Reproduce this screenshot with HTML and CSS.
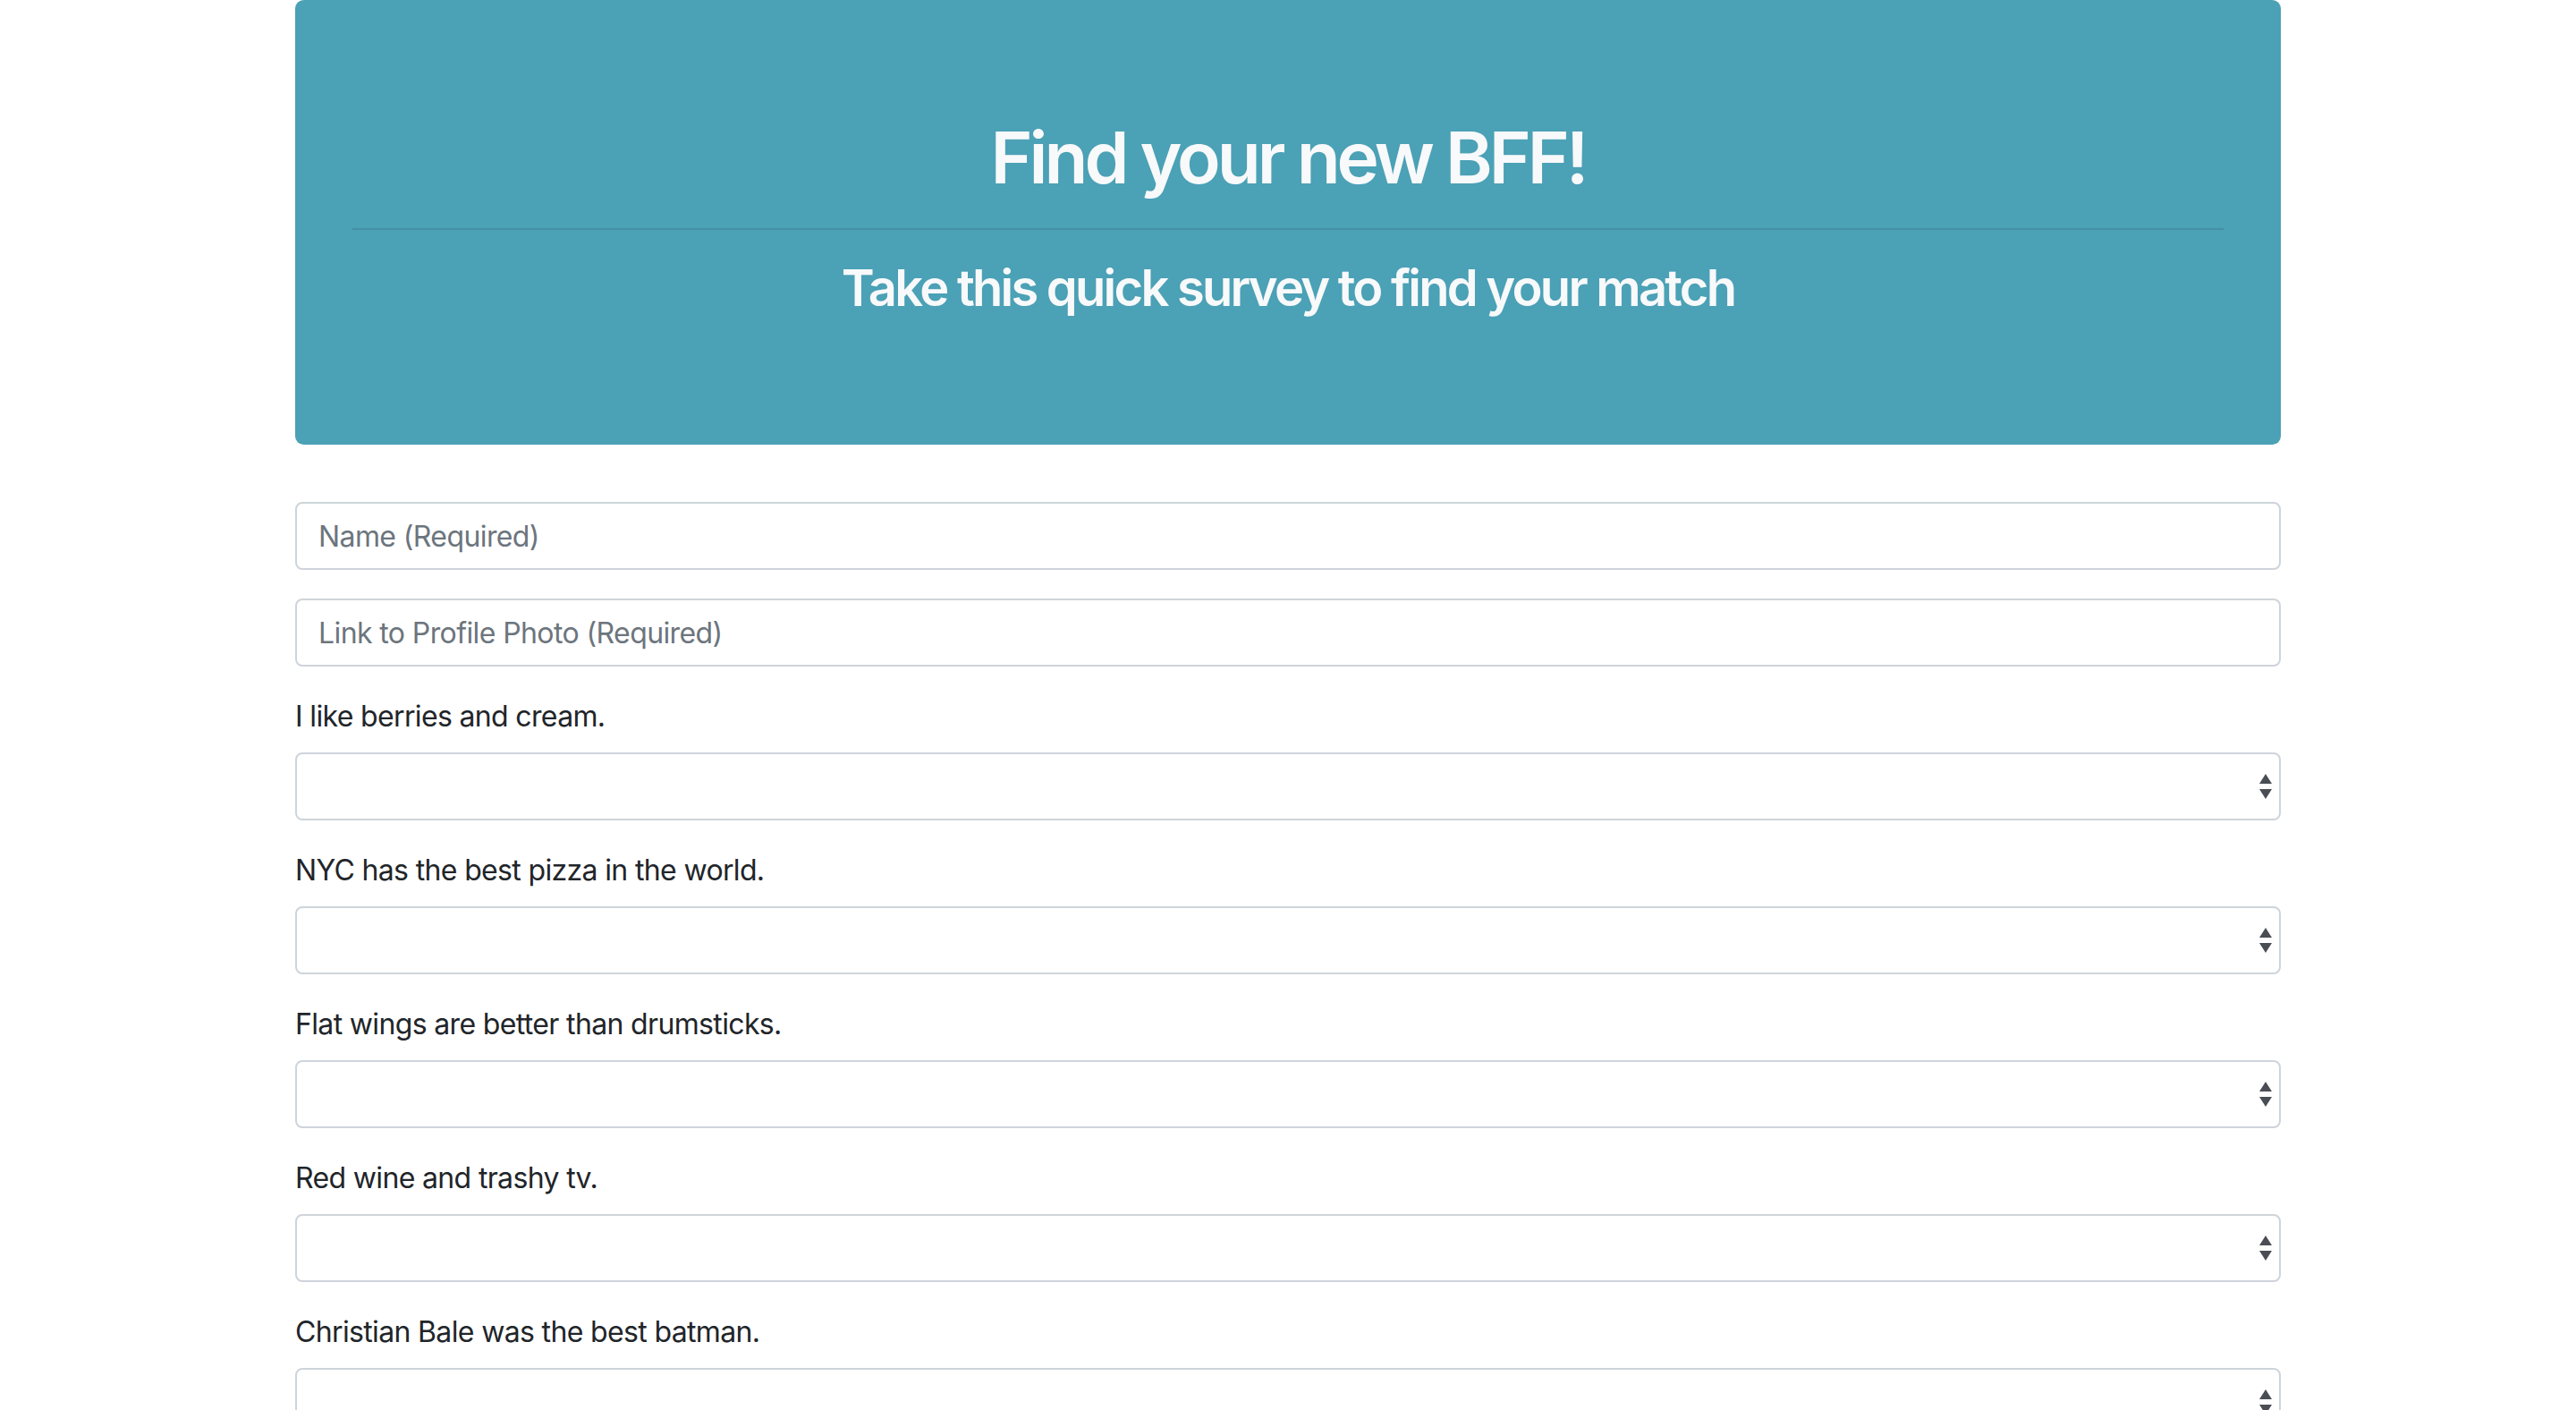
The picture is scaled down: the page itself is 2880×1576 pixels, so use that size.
FILE: index.html
```html
<!DOCTYPE html>
<html lang="en">
<head>
<meta charset="utf-8">
<title>Friend Finder Survey</title>
<link rel="stylesheet" href="styles.css">
</head>
<body>
<div class="container">
  <div class="jumbotron">
    <h1 class="title">Find your new BFF!</h1>
    <hr class="divider">
    <h3 class="subtitle">Take this quick survey to find your match</h3>
  </div>

  <form class="survey">
    <div class="form-group">
      <input class="form-control" type="text" placeholder="Name (Required)">
    </div>
    <div class="form-group">
      <input class="form-control" type="text" placeholder="Link to Profile Photo (Required)">
    </div>

    <div class="form-group">
      <label class="q-label">I like berries and cream.</label>
      <div class="select-wrap">
        <select class="form-control select"><option></option><option>1 (Strongly Disagree)</option><option>2</option><option>3</option><option>4</option><option>5 (Strongly Agree)</option></select>
        <svg class="arrows" viewBox="0 0 14 28" width="14" height="28"><path d="M7 0 L14 11 L0 11 Z M0 17 L14 17 L7 28 Z"/></svg>
      </div>
    </div>

    <div class="form-group">
      <label class="q-label">NYC has the best pizza in the world.</label>
      <div class="select-wrap">
        <select class="form-control select"><option></option><option>1 (Strongly Disagree)</option><option>2</option><option>3</option><option>4</option><option>5 (Strongly Agree)</option></select>
        <svg class="arrows" viewBox="0 0 14 28" width="14" height="28"><path d="M7 0 L14 11 L0 11 Z M0 17 L14 17 L7 28 Z"/></svg>
      </div>
    </div>

    <div class="form-group">
      <label class="q-label">Flat wings are better than drumsticks.</label>
      <div class="select-wrap">
        <select class="form-control select"><option></option><option>1 (Strongly Disagree)</option><option>2</option><option>3</option><option>4</option><option>5 (Strongly Agree)</option></select>
        <svg class="arrows" viewBox="0 0 14 28" width="14" height="28"><path d="M7 0 L14 11 L0 11 Z M0 17 L14 17 L7 28 Z"/></svg>
      </div>
    </div>

    <div class="form-group">
      <label class="q-label">Red wine and trashy tv.</label>
      <div class="select-wrap">
        <select class="form-control select"><option></option><option>1 (Strongly Disagree)</option><option>2</option><option>3</option><option>4</option><option>5 (Strongly Agree)</option></select>
        <svg class="arrows" viewBox="0 0 14 28" width="14" height="28"><path d="M7 0 L14 11 L0 11 Z M0 17 L14 17 L7 28 Z"/></svg>
      </div>
    </div>

    <div class="form-group">
      <label class="q-label">Christian Bale was the best batman.</label>
      <div class="select-wrap">
        <select class="form-control select"><option></option><option>1 (Strongly Disagree)</option><option>2</option><option>3</option><option>4</option><option>5 (Strongly Agree)</option></select>
        <svg class="arrows" viewBox="0 0 14 28" width="14" height="28"><path d="M7 0 L14 11 L0 11 Z M0 17 L14 17 L7 28 Z"/></svg>
      </div>
    </div>

    <div class="form-group">
      <label class="q-label">Dogs are better than cats.</label>
      <div class="select-wrap">
        <select class="form-control select"><option></option><option>1 (Strongly Disagree)</option><option>2</option><option>3</option><option>4</option><option>5 (Strongly Agree)</option></select>
        <svg class="arrows" viewBox="0 0 14 28" width="14" height="28"><path d="M7 0 L14 11 L0 11 Z M0 17 L14 17 L7 28 Z"/></svg>
      </div>
    </div>
  </form>
</div>
</body>
</html>
```

FILE: styles.css
```css
* { box-sizing: border-box; }

html, body {
  margin: 0;
  padding: 0;
  background: #ffffff;
}

body {
  font-family: Inter, "Noto Sans", "Liberation Sans", sans-serif;
  font-size: 32px;
  line-height: 48px;
  color: #212529;
}

.container {
  width: 2280px;
  margin: 0 auto;
  padding: 0 30px;
}

.jumbotron {
  background: #4ba1b6;
  border-radius: 9.6px;
  padding: 128px 64px 125px;
  margin-bottom: 64px;
  text-align: center;
  color: #f8f9fa;
}

.title {
  margin: 0 0 16px;
  font-size: 80px;
  line-height: 96px;
  font-weight: 600;
  letter-spacing: -0.05em;
}

.divider {
  margin: 31px 0 32px;
  border: 0;
  border-top: 2px solid rgba(0, 0, 0, 0.1);
  height: 0;
}

.subtitle {
  margin: 0 0 16px;
  font-size: 56px;
  line-height: 67px;
  font-weight: 600;
  letter-spacing: -0.049em;
}

.survey {
  margin: 0;
}

.form-group {
  margin-bottom: 32px;
}

.q-label {
  display: block;
  margin-bottom: 16px;
  letter-spacing: -0.65px;
}

.form-control {
  display: block;
  width: 100%;
  height: 76px;
  padding: 12px 24px;
  font-family: inherit;
  font-size: 32px;
  line-height: 48px;
  color: #495057;
  background: #ffffff;
  border: 2px solid #ced4da;
  border-radius: 8px;
  outline: none;
  letter-spacing: -0.6px;
}

.form-control::placeholder {
  color: #6c757d;
  opacity: 1;
}

.select-wrap {
  position: relative;
}

.select {
  -webkit-appearance: none;
  appearance: none;
}

.arrows {
  position: absolute;
  right: 10px;
  top: 24px;
  fill: #4a4e54;
  pointer-events: none;
}
```
